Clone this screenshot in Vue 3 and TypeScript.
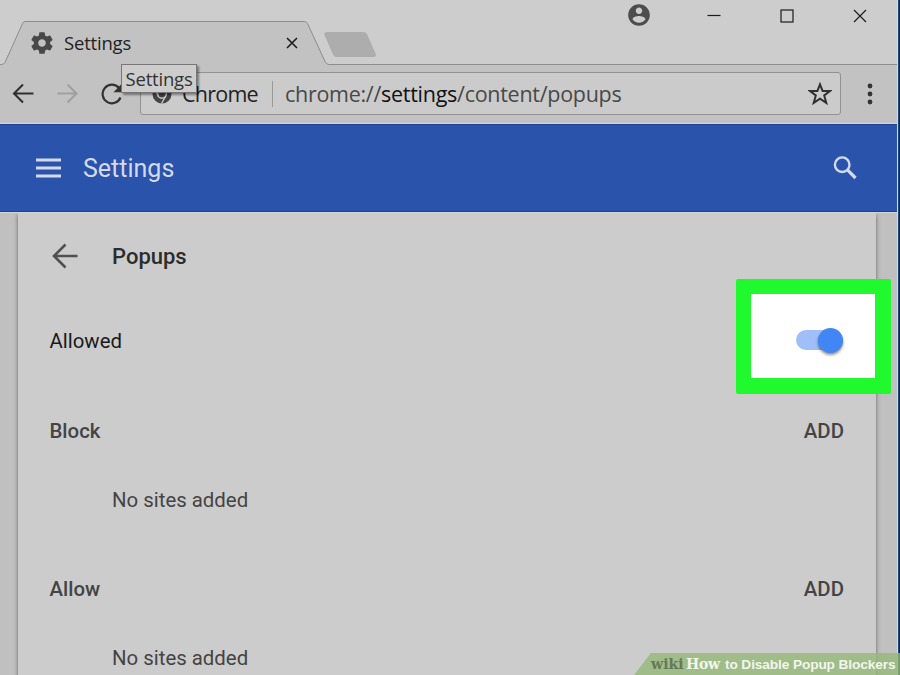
<script setup lang="ts">
interface SiteList {
  title: string
  empty: string
}

const lists: SiteList[] = [
  { title: 'Block', empty: 'No sites added' },
  { title: 'Allow', empty: 'No sites added' },
]
</script>

<template>
  <div class="desktop">
    <div class="window">
      <div class="tabstrip">
        <svg class="tab-shape" width="897" height="66" viewBox="0 0 897 66">
          <path d="M0 65H1.500Q4 65 5 62.500L22.500 23.500Q23.500 21.500 25 21.500H304.500Q306.500 21.500 307.500 23.500L325.500 62.500Q327 65 329 65H897V66H0Z" fill="#c2c2c2" />
          <path d="M0 64.500H1.500Q4 64.500 5 62.500L22.500 23.500Q23.500 21.500 25 21.500H304.500Q306.500 21.500 307.500 23.500L325.500 62.500Q327 64.500 329 64.500H897" fill="none" stroke="#8d8d8d" />
          <path d="M327 32H363Q366 32 367 34L375.500 53.500Q377 57 373.500 57H337Q334 57 333 54.500L324.500 35Q323.500 32 327 32Z" fill="#adadad" />
        </svg>
        <div class="tab">
          <svg class="gear" width="26" height="26" viewBox="0 0 24 24">
            <path fill="#484848" d="M19.430 12.980c.040-.320.070-.640.070-.980s-.030-.660-.070-.980l2.110-1.650c.190-.150.240-.420.120-.640l-2-3.460c-.120-.220-.390-.300-.610-.220l-2.490 1c-.520-.400-1.080-.730-1.690-.980l-.380-2.650C14.460 2.180 14.250 2 14 2h-4c-.250 0-.460.180-.490.420l-.380 2.650c-.610.250-1.170.590-1.690.980l-2.490-1c-.230-.090-.490 0-.610.220l-2 3.460c-.130.220-.070.490.120.640l2.110 1.650c-.040.320-.070.650-.070.980s.030.660.070.980l-2.110 1.650c-.190.150-.240.420-.120.640l2 3.460c.120.220.390.300.610.220l2.490-1c.520.400 1.080.730 1.690.980l.380 2.650c.030.240.240.420.490.420h4c.250 0 .460-.180.490-.420l.380-2.650c.610-.250 1.170-.590 1.690-.980l2.490 1c.230.090.490 0 .610-.220l2-3.460c.120-.220.070-.490-.120-.640l-2.110-1.650zM12 15.500c-1.930 0-3.500-1.570-3.500-3.500s1.570-3.500 3.500-3.500 3.500 1.570 3.500 3.500-1.570 3.500-3.500 3.500z" />
          </svg>
          <span class="tab-title">Settings</span>
          <svg class="tab-close" width="12" height="12" viewBox="0 0 12 12"><path d="M1 1L11 11M11 1L1 11" stroke="#222" stroke-width="1.700" fill="none" /></svg>
        </div>
        <div class="controls">
          <svg width="26" height="26" viewBox="0 0 24 24"><path fill="#4d4d4d" d="M12 2C6.480 2 2 6.480 2 12s4.480 10 10 10 10-4.480 10-10S17.520 2 12 2zm0 3c1.660 0 3 1.340 3 3s-1.340 3-3 3-3-1.340-3-3 1.340-3 3-3zm0 14.200c-2.500 0-4.710-1.280-6-3.220.030-1.990 4-3.080 6-3.080 1.990 0 5.970 1.090 6 3.080-1.290 1.940-3.500 3.220-6 3.220z" /></svg>
          <svg class="minimize" width="14" height="14" viewBox="0 0 14 14"><path d="M0.500 6.500H13.500" stroke="#1c1c1c" stroke-width="1.200" /></svg>
          <svg class="maximize" width="14" height="14" viewBox="0 0 14 14"><rect x="1" y="1" width="12" height="12" fill="none" stroke="#1c1c1c" stroke-width="1.200" /></svg>
          <svg class="close" width="14" height="14" viewBox="0 0 14 14"><path d="M1 1L13 13M13 1L1 13" stroke="#1c1c1c" stroke-width="1.200" /></svg>
        </div>
      </div>

      <div class="toolbar">
        <svg width="22" height="20" viewBox="0 0 22 20"><path d="M21.500 9.500H2M11 0.500L2 9.500L11 18.500" fill="none" stroke="#303030" stroke-width="2.100" /></svg>
        <svg class="forward" width="22" height="20" viewBox="0 0 22 20"><path d="M0.500 9.500H19M10.500 0.500L19.500 9.500L10.500 18.500" fill="none" stroke="#a0a0a0" stroke-width="2.100" /></svg>
        <svg class="reload" width="22" height="22" viewBox="0 0 22 22"><path d="M19.500 14.500A9.300 9.300 0 1 1 18 5" fill="none" stroke="#333" stroke-width="2.200" /><path d="M20.500 1V9.200H12.500Z" fill="#333" /></svg>
        <div class="omnibox">
          <svg class="chrome-logo" width="20" height="20" viewBox="0 0 20 20">
            <circle cx="10" cy="10" r="9.500" fill="#444" />
            <circle cx="10" cy="10" r="4.300" fill="#444" stroke="#cbcbcb" stroke-width="1.500" />
            <path d="M10 5.700H18.500M6.300 12.100L2 4.800M13.700 12.100L9.500 19.500" stroke="#cbcbcb" stroke-width="1.300" />
          </svg>
          <span class="origin">Chrome</span>
          <span class="divider"></span>
          <span class="url">chrome://<b>settings</b>/content/popups</span>
          <svg class="star" width="24" height="24" viewBox="0 0 24 24"><path d="M12 2.300L14.650 9H21.900L16.200 13.400L18.300 20.800L12 16.600L5.700 20.800L7.800 13.400L2.100 9H9.350Z" fill="none" stroke="#303030" stroke-width="2" /></svg>
        </div>
        <svg class="more" width="6" height="22" viewBox="0 0 6 22"><circle cx="3" cy="3" r="2.400" fill="#333" /><circle cx="3" cy="11" r="2.400" fill="#333" /><circle cx="3" cy="19" r="2.400" fill="#333" /></svg>
        <div class="tooltip">Settings</div>
      </div>

      <header class="header">
        <svg width="26" height="20" viewBox="0 0 26 20"><path d="M0 2H25M0 10H25M0 18H25" stroke="#d5daea" stroke-width="3" /></svg>
        <h1>Settings</h1>
        <svg class="search" width="24" height="24" viewBox="0 0 24 24"><circle cx="9.200" cy="8.700" r="7.300" fill="none" stroke="#d5daea" stroke-width="2.400" /><path d="M14.200 13.700L22.500 22" stroke="#d5daea" stroke-width="3.200" /></svg>
      </header>

      <main class="page">
        <section class="card">
          <div class="row title-row">
            <svg width="26" height="26" viewBox="0 0 26 26"><path d="M25.500 13H3M13.500 1.500L2 13L13.500 24.500" fill="none" stroke="#505050" stroke-width="2.600" /></svg>
            <h2>Popups</h2>
          </div>
          <div class="row allowed-row">
            <span>Allowed</span>
          </div>
          <template v-for="list in lists" :key="list.title">
            <div class="row list-row">
              <span class="list-title">{{ list.title }}</span>
              <span class="add">ADD</span>
            </div>
            <div class="row empty-row">{{ list.empty }}</div>
          </template>
        </section>
      </main>
    </div>

    <div class="highlight">
      <div class="toggle"><span class="knob"></span></div>
    </div>
    <div class="banner"><span class="wiki">wiki</span><span class="how">How</span><span class="caption">to Disable Popup Blockers</span></div>
  </div>
</template>

<style>
body {
  margin: 0;
  overflow: hidden;
}
</style>

<style scoped>
* {
  box-sizing: border-box;
}
svg {
  display: block;
  flex: none;
}
.desktop {
  position: relative;
  width: 900px;
  height: 675px;
  overflow: hidden;
  background: linear-gradient(90deg, #2f65a5 898px, #092a55 899px);
  font-family: Roboto, sans-serif;
}
.window {
  display: flex;
  flex-direction: column;
  width: 898px;
  height: 675px;
  border-right: 1px solid #d4dbe3;
  background: #c2c2c2;
}
.tabstrip {
  position: relative;
  display: flex;
  justify-content: space-between;
  height: 66px;
  background: #cdcdcd;
}
.tab-shape {
  position: absolute;
  inset: 0;
}
.tab {
  position: relative;
  display: flex;
  align-items: center;
  width: 300px;
  height: 44px;
  margin-top: 21px;
  padding-left: 29px;
}
.tab-title {
  margin-left: 9px;
  flex: 1;
  font: 18.500px/26px "Open Sans", sans-serif;
  letter-spacing: -0.200px;
  color: #222;
}
.tab-close {
  margin-right: 2px;
}
.controls {
  position: relative;
  display: grid;
  grid-template-columns: 26px 14px 14px 14px;
  column-gap: 59px;
  align-items: center;
  height: 31px;
  margin-right: 30px;
}
.controls svg:first-child {
  margin-left: 4px;
  margin-top: -1px;
}
.toolbar {
  position: relative;
  display: flex;
  align-items: center;
  height: 58px;
  padding: 0 24px 2px 12px;
  border-bottom: 1px solid #d8d8d8;
  background: #c2c2c2;
}
.forward {
  margin-left: 23px;
}
.reload {
  margin-left: 22px;
}
.omnibox {
  display: flex;
  align-items: center;
  width: 701px;
  height: 43px;
  margin-left: 17px;
  padding-left: 11px;
  border: 1px solid #929292;
  border-radius: 3px;
  background: #cbcbcb;
  font: 21.500px/30px "Open Sans", sans-serif;
}
.origin {
  width: 76px;
  margin-left: 10px;
  padding-top: 1px;
  letter-spacing: -0.750px;
  color: #222;
}
.divider {
  width: 1px;
  height: 26px;
  margin: 0 12px 0 14px;
  background: #999;
}
.url {
  flex: 1;
  padding-top: 1px;
  letter-spacing: -0.280px;
  color: #484848;
  white-space: nowrap;
}
.url b {
  font-weight: 400;
  color: #111;
}
.star {
  margin-right: 8px;
}
.more {
  margin-left: auto;
}
.tooltip {
  position: absolute;
  left: 121px;
  top: -2px;
  width: 76px;
  height: 29px;
  border: 1px solid #777;
  background: #cdcdcd;
  box-shadow: 2px 2px 2px rgba(0, 0, 0, 0.4);
  text-align: center;
  font: 18.500px/27px "Open Sans", sans-serif;
  letter-spacing: -0.200px;
  color: #333;
}
.header {
  display: flex;
  align-items: center;
  height: 88px;
  padding: 0 40px 0 36px;
  border-top: 1px solid #1b4197;
  border-bottom: 1px solid #1b4197;
  background: #2a53ab;
}
.header h1 {
  flex: 1;
  margin: 0 0 0 21px;
  padding-top: 2px;
  font-size: 25px;
  font-weight: 400;
  line-height: 30px;
  color: #d5daea;
}
.page {
  flex: 1;
  padding: 0 21px 0 18px;
  border-top: 1px solid #d5d5d5;
  background: #c0c0c0;
  overflow: hidden;
}
.card {
  height: 500px;
  padding: 0 32px 0 31.500px;
  background: #cccccc;
  box-shadow: 0 2px 4px rgba(0, 0, 0, 0.5);
  font-size: 20.400px;
  color: #444;
}
.row {
  display: flex;
  align-items: center;
}
.title-row {
  height: 86px;
  padding-left: 2px;
}
.title-row h2 {
  margin: 0 0 0 34.500px;
  font-size: 22px;
  font-weight: 500;
  color: #2c2c2c;
}
.allowed-row {
  height: 84px;
  color: #1a1a1a;
}
.list-row {
  justify-content: space-between;
  height: 95px;
}
.list-title,
.add {
  font-weight: 500;
}
.empty-row {
  height: 63px;
  padding: 0 0 19px 62.500px;
}
.highlight {
  position: absolute;
  left: 736px;
  top: 279px;
  display: flex;
  align-items: center;
  width: 155px;
  height: 115px;
  padding-left: 45px;
  border: 15px solid #20f92d;
  border-bottom-width: 16px;
  border-right-width: 16px;
  border-radius: 2px;
  background: #fff;
}
.toggle {
  display: flex;
  align-items: center;
  justify-content: flex-end;
  width: 47px;
  height: 20px;
  margin-top: 8px;
  border-radius: 10px;
  background: #a0bff8;
}
.knob {
  width: 25px;
  height: 25px;
  flex: none;
  border-radius: 50%;
  background: #4285f4;
  box-shadow: 0 2px 3px rgba(0, 0, 0, 0.45);
}
.banner {
  position: absolute;
  left: 634px;
  top: 653px;
  display: flex;
  align-items: center;
  width: 266px;
  height: 22px;
  padding-left: 17px;
  background: rgba(147, 184, 120, 0.8);
  clip-path: polygon(17px 0, 100% 0, 100% 100%, 0 100%);
  font: bold 13.700px/22px "Liberation Sans", sans-serif;
  color: #f2f6ee;
  white-space: nowrap;
}
.wiki,
.how {
  font-family: "DejaVu Serif", serif;
  font-size: 14px;
}
.wiki {
  width: 35px;
  letter-spacing: 0.100px;
  color: #66785b;
}
.how {
  width: 39px;
  letter-spacing: -0.300px;
}
.caption {
  padding-top: 1px;
  letter-spacing: -0.120px;
}
</style>
